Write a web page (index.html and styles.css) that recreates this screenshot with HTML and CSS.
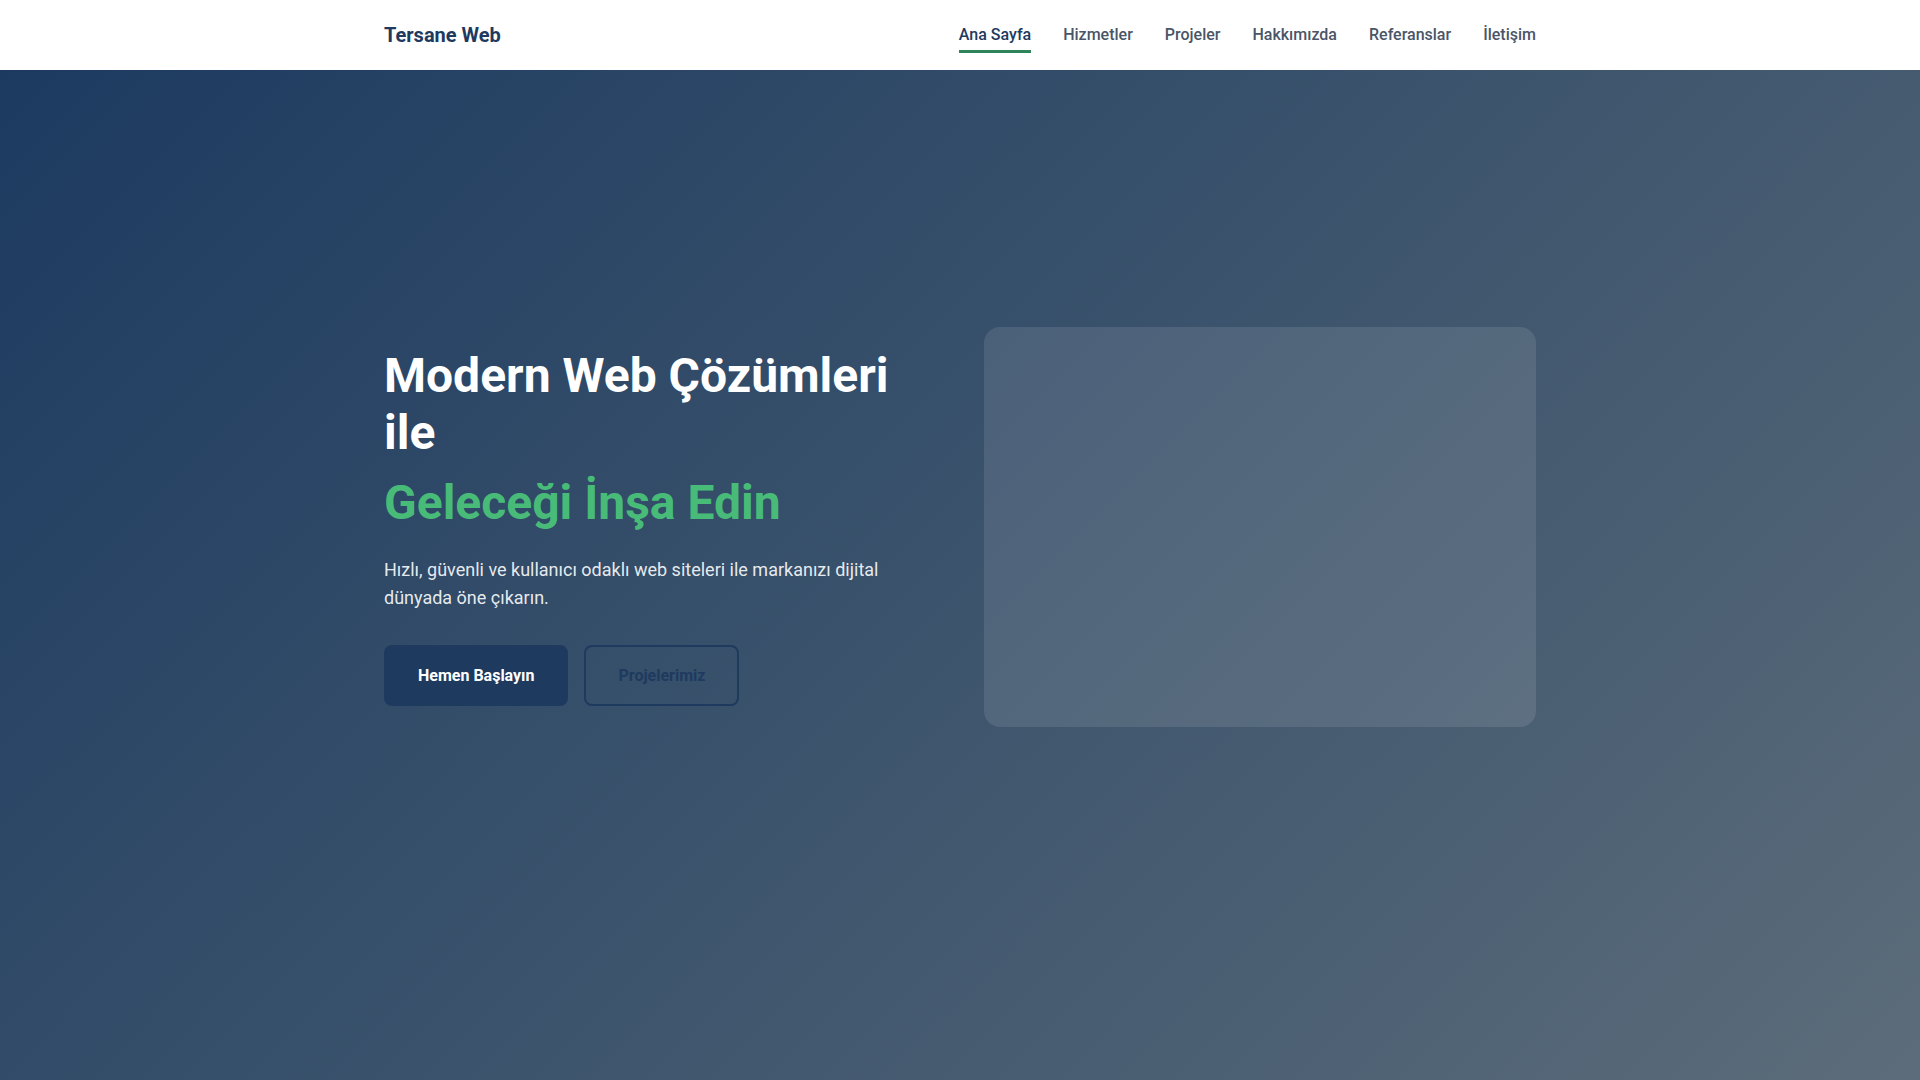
FILE: index.html
```html
<!DOCTYPE html>
<html lang="tr">
<head>
<meta charset="utf-8">
<title>Tersane Web</title>
<link rel="stylesheet" href="styles.css">
</head>
<body>
<header class="navbar">
  <div class="container nav-inner">
    <a class="logo" href="#">Tersane Web</a>
    <nav class="nav-links">
      <a class="nav-link active" href="#">Ana Sayfa</a>
      <a class="nav-link" href="#">Hizmetler</a>
      <a class="nav-link" href="#">Projeler</a>
      <a class="nav-link" href="#">Hakkımızda</a>
      <a class="nav-link" href="#">Referanslar</a>
      <a class="nav-link" href="#">İletişim</a>
    </nav>
  </div>
</header>
<section class="hero">
  <div class="container hero-grid">
    <div class="hero-text">
      <h1 class="hero-title">Modern Web Çözümleri ile <span class="accent">Geleceği İnşa Edin</span></h1>
      <p class="hero-desc">Hızlı, güvenli ve kullanıcı odaklı web siteleri ile markanızı dijital dünyada öne çıkarın.</p>
      <div class="hero-actions">
        <a class="btn btn-primary" href="#">Hemen Başlayın</a>
        <a class="btn btn-outline" href="#">Projelerimiz</a>
      </div>
    </div>
    <div class="hero-visual"></div>
  </div>
</section>
</body>
</html>
```
FILE: styles.css
```css
* { box-sizing: border-box; margin: 0; padding: 0; }
html, body { height: 100%; }
body {
  font-family: Roboto, "Liberation Sans", Arial, sans-serif;
  background: #ffffff;
  overflow: hidden;
}
a { text-decoration: none; }
.container {
  max-width: 1200px;
  margin: 0 auto;
  padding: 0 24px;
}
.navbar {
  height: 70px;
  background: #ffffff;
}
.nav-inner {
  height: 70px;
  display: flex;
  align-items: center;
  justify-content: space-between;
}
.logo {
  font-size: 20px;
  font-weight: 700;
  color: #1e3a5f;
}
.nav-links {
  display: flex;
  gap: 32px;
}
.nav-link {
  position: relative;
  font-size: 16px;
  font-weight: 500;
  color: #4a5568;
  line-height: 20px;
  padding: 6px 0;
}
.nav-link.active { color: #1e3a5f; }
.nav-link.active::after {
  content: "";
  position: absolute;
  left: 0; right: 0;
  bottom: -2px;
  height: 3px;
  background: #2f855a;
}
.hero {
  height: calc(100vh - 70px);
  background: linear-gradient(135deg, #1c3a60 0%, #3b536c 50%, #5c6c7a 100%);
  display: flex;
  align-items: center;
  padding-bottom: 97px;
}
.hero-grid {
  width: 100%;
  display: grid;
  grid-template-columns: 1fr 1fr;
  gap: 48px;
  align-items: center;
}
.hero-title {
  font-size: 48px;
  font-weight: 700;
  line-height: 1.2;
  color: #ffffff;
}
.accent {
  display: block;
  margin-top: 12px;
  color: #48bb78;
}
.hero-desc {
  margin-top: 24px;
  font-size: 18px;
  line-height: 1.6;
  color: rgba(255,255,255,0.9);
}
.hero-actions {
  margin-top: 32px;
  display: flex;
  gap: 16px;
}
.btn {
  display: inline-block;
  padding: 19px 32px;
  font-size: 16px;
  font-weight: 700;
  line-height: 19px;
  border-radius: 8px;
  border: 2px solid transparent;
}
.btn-primary {
  background: #1e3a5f;
  border-color: #1e3a5f;
  color: #ffffff;
}
.btn-outline {
  background: transparent;
  border-color: #1e3a5f;
  color: #1e3a5f;
}
.hero-visual {
  height: 400px;
  border-radius: 16px;
  background: rgba(255,255,255,0.1);
}
```
